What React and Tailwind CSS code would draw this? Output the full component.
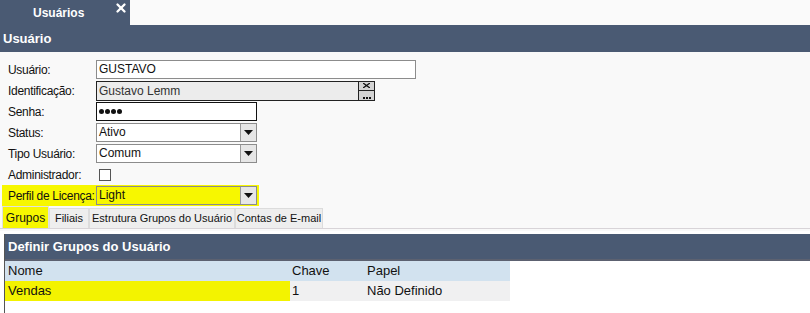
import { X } from 'lucide-react'

function Arrow() {
  return (
    <div className="w-[16px] h-full bg-[#e6e6e6] border-l border-[#9a9a9a] flex items-center justify-center">
      <svg width="9" height="5" viewBox="0 0 9 5"><path d="M0 0h9L4.5 5z" fill="#111" /></svg>
    </div>
  )
}

function Row({ label, children, hl }) {
  return (
    <div className={`flex items-center h-[21px] ${hl ? 'bg-[#f7f700] w-[257px] ml-[2px] pl-[6px]' : 'pl-[8px]'}`}>
      <div className="w-[88px] whitespace-nowrap text-[12px] tracking-[-0.3px] text-[#111]">{label}</div>
      {children}
    </div>
  )
}

function Select({ value, hl }) {
  return (
    <div className={`flex w-[161px] h-[19px] border border-[#8c8c8c] ${hl ? 'bg-[#f7f700]' : 'bg-white'}`}>
      <div className="flex-1 text-[12px] leading-[17px] pl-[2px] text-[#111]">{value}</div>
      <Arrow />
    </div>
  )
}

export default function App() {
  return (
    <div className="w-[810px] h-[313px] bg-white overflow-hidden" style={{ fontFamily: '"Liberation Sans", Arial, sans-serif' }}>
      <div className="flex h-[25px] bg-[#fafafa]">
        <div className="w-[130px] bg-[#4a5a73] relative flex items-center pl-[33px]">
          <span className="text-white font-bold text-[12px]">Usuários</span>
          <X className="absolute right-[2px] top-[1px] w-[14px] h-[14px] text-white" strokeWidth={4} />
        </div>
      </div>
      <div className="h-[27px] bg-[#4a5a73] flex items-center pl-[3px] text-white font-bold text-[13px]">Usuário</div>
      <div className="bg-[#f9f9f9] pt-[7px] h-[179px]">
        <Row label="Usuário:">
          <div className="w-[320px] h-[19px] bg-white border border-[#8c8c8c] text-[12px] leading-[17px] pl-[2px] text-[#111]">GUSTAVO</div>
        </Row>
        <Row label="Identificação:">
          <div className="flex w-[279px] h-[20px] bg-[#ececec] border border-[#222]">
            <div className="flex-1 text-[12px] leading-[18px] pl-[2px] text-[#333]">Gustavo Lemm</div>
            <div className="w-[16px] flex flex-col border-l border-[#222]">
              <div className="h-[9px] bg-[#d4d4d4] border-b border-[#222] flex items-center justify-center">
                <svg width="7" height="5" viewBox="0 0 7 5"><path d="M0 0l7 5M7 0L0 5" stroke="#111" strokeWidth="1.3" /></svg>
              </div>
              <div className="flex-1 bg-[#d4d4d4] flex items-end justify-center pb-[1px] gap-[1px]">
                <span className="w-[2px] h-[2px] bg-[#111]" />
                <span className="w-[2px] h-[2px] bg-[#111]" />
                <span className="w-[2px] h-[2px] bg-[#111]" />
              </div>
            </div>
          </div>
        </Row>
        <Row label="Senha:">
          <div className="w-[161px] h-[19px] bg-white border border-[#111] flex items-center pl-[2px] gap-[1px]">
            {[0, 1, 2, 3].map((i) => <span key={i} className="w-[5px] h-[5px] rounded-full bg-[#111]" />)}
          </div>
        </Row>
        <Row label="Status:"><Select value="Ativo" /></Row>
        <Row label="Tipo Usuário:"><Select value="Comum" /></Row>
        <Row label="Administrador:">
          <div className="w-[12px] h-[12px] ml-[3px] bg-white border border-[#555]" />
        </Row>
        <Row label="Perfil de Licença:" hl><Select value="Light" hl /></Row>
        <div className="flex items-end h-[22px] mt-[1px] pl-[2px] border-b border-[#d8d4d8] text-[11px] text-[#111] whitespace-nowrap">
          <div className="h-[22px] w-[47px] bg-[#f7f700] border border-[#e0e0e0] border-b-0 flex items-center justify-center text-[12px]">Grupos</div>
          <div className="h-[20px] w-[40px] bg-[#eeeeee] border border-[#dcdcdc] border-b-0 flex items-center justify-center">Filiais</div>
          <div className="h-[20px] w-[146px] bg-[#eeeeee] border border-[#dcdcdc] border-b-0 flex items-center justify-center">Estrutura Grupos do Usuário</div>
          <div className="h-[20px] w-[88px] bg-[#eeeeee] border border-[#dcdcdc] border-b-0 flex items-center justify-center">Contas de E-mail</div>
        </div>
      </div>
      <div className="ml-[4px] mt-[3px] border-l border-[#555] h-[82px]">
        <div className="h-[27px] bg-[#4a5a73] border-b-2 border-[#5c6170] flex items-center pl-[3px] text-white font-bold text-[13px]">Definir Grupos do Usuário</div>
        <div className="w-[505px] text-[13px] text-[#111]">
          <div className="flex h-[20px] bg-[#d2e2ef] items-center">
            <div className="w-[285px] pl-[3px]">Nome</div>
            <div className="w-[74px] pl-[2px]">Chave</div>
            <div className="flex-1 pl-[3px]">Papel</div>
          </div>
          <div className="flex h-[20px] bg-[#f0f0f1] items-center">
            <div className="w-[285px] h-full bg-[#f3f300] pl-[3px] flex items-center">Vendas</div>
            <div className="w-[74px] pl-[2px]">1</div>
            <div className="flex-1 pl-[3px]">Não Definido</div>
          </div>
        </div>
      </div>
    </div>
  )
}
